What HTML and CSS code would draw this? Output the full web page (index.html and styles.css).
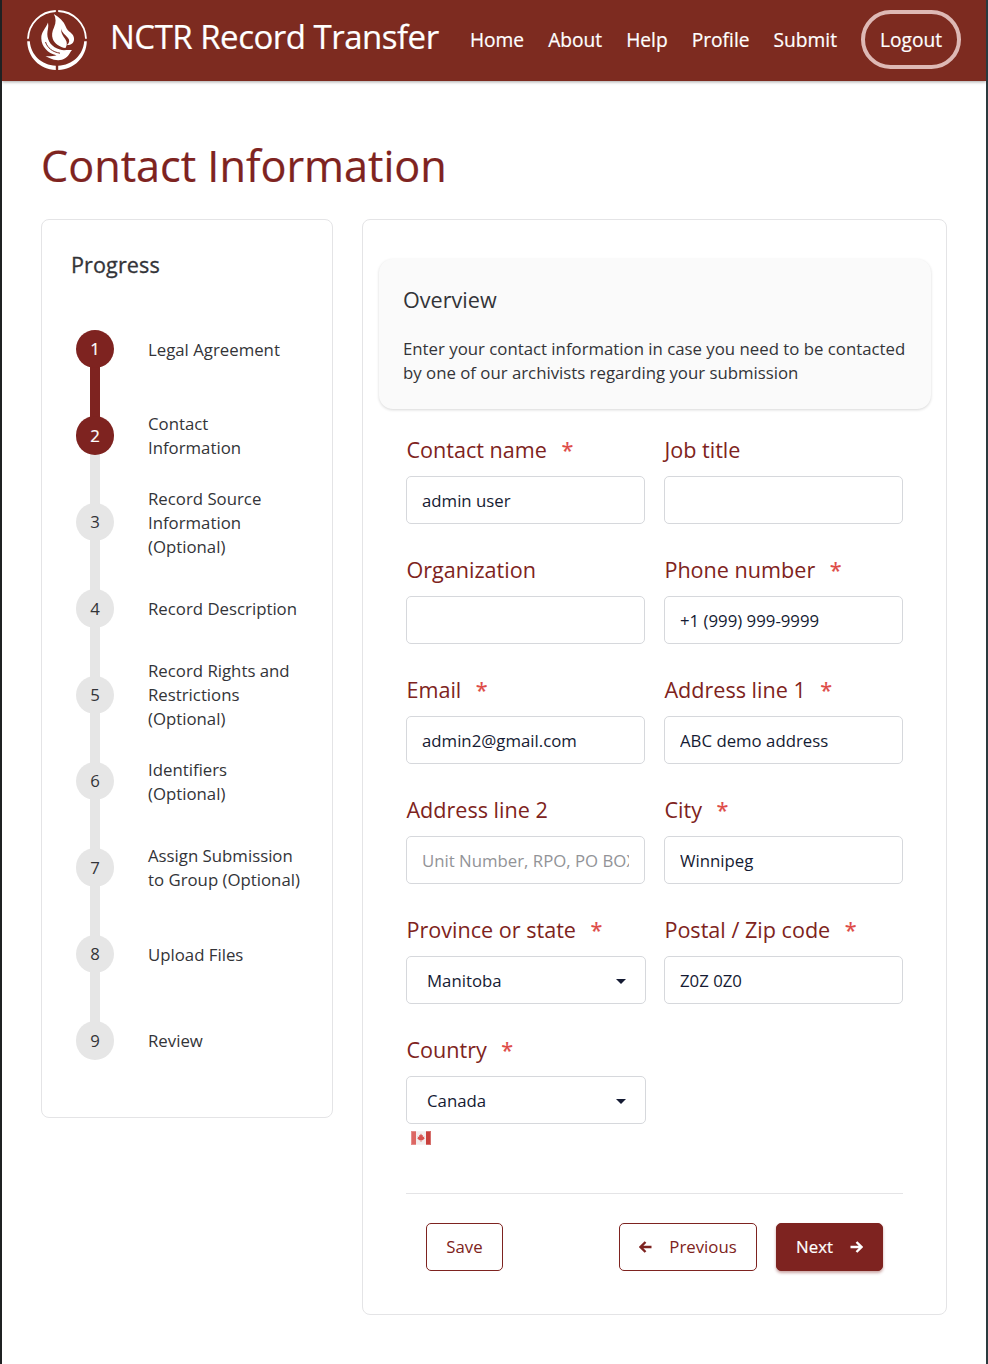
FILE: index.html
```html
<!DOCTYPE html>
<html lang="en">
<head>
<meta charset="utf-8">
<title>NCTR Record Transfer</title>
<link rel="stylesheet" href="styles.css">
</head>
<body>
<header class="header">
  <svg class="logo" viewBox="0 0 60 60" fill="none">
    <path stroke="#fff" d="M28.800 1A28.800 28.800 0 0 0 1 28.800M31.200 1A28.800 28.800 0 0 1 59 28.800" stroke-width="1.800"/>
    <path fill="#fff" d="M.2 31.200H2.800C3.800 45 14.500 54.900 28.800 55.800V60C12.500 59.400.6 47 .2 31.200ZM59.800 31.200H57.200C56.200 45 45.500 54.900 31.200 55.800V60C47.500 59.400 59.400 47 59.800 31.200Z"/>
    <path fill="#fff" d="M26.800 4C32 7 37 11.500 38.700 16.500C40 20.500 43 21.500 45.500 24.500C48 28 47.500 32.500 44 34.300C42.500 35 41 35.200 39.700 35.200C42.500 33 43 30.500 41 28C38 24.500 34.800 22.500 34 18.500C34 23.500 36.500 26.500 38.500 29.500C40.500 32.500 40 35.500 38.500 38C33 37.500 27.500 33.500 25.800 29C24.500 25.500 25 21.500 27 17.500C29.300 12.500 29 8 26.800 4Z"/>
    <path fill="#fff" d="M21 12.500C22 17 20.300 20.500 20.300 24C20.300 31 25 37.500 33 39.600C37 40.800 40.500 39.500 45 40C42.500 42.500 42.500 45.500 38.500 48C33.500 51.500 27.500 50.300 23 48.200C21.500 47.500 20 46.600 18.500 46.200C22.500 46.600 26.500 46.200 29.500 45.300C20.500 43.200 14.600 36.500 14.300 28.500C14 21.500 19 18.500 21 12.500Z"/>
    <path stroke="#7d2b20" stroke-width="1" d="M18.500 32C20.500 38 25.500 42 33 43.200M23 27C24.500 33 29 37.300 36 39.300"/>
  </svg>
  <div class="brand">NCTR Record Transfer</div>
  <nav class="nav">
    <a>Home</a><a>About</a><a>Help</a><a>Profile</a><a>Submit</a>
    <a class="logout">Logout</a>
  </nav>
</header>
<main class="page">
  <h1 class="title">Contact Information</h1>
  <div class="columns">
    <aside class="card progress">
      <h2 class="progress-title">Progress</h2>
      <ol class="steps">
        <li class="step done"><span class="dot">1</span><span class="name">Legal Agreement</span></li>
        <li class="step done"><span class="dot">2</span><span class="name">Contact Information</span></li>
        <li class="step"><span class="dot">3</span><span class="name">Record Source Information (Optional)</span></li>
        <li class="step"><span class="dot">4</span><span class="name">Record Description</span></li>
        <li class="step"><span class="dot">5</span><span class="name">Record Rights and Restrictions (Optional)</span></li>
        <li class="step"><span class="dot">6</span><span class="name">Identifiers (Optional)</span></li>
        <li class="step"><span class="dot">7</span><span class="name">Assign Submission to Group (Optional)</span></li>
        <li class="step"><span class="dot">8</span><span class="name">Upload Files</span></li>
        <li class="step"><span class="dot">9</span><span class="name">Review</span></li>
      </ol>
    </aside>
    <section class="card content">
      <div class="overview">
        <h2 class="overview-title">Overview</h2>
        <p class="overview-text">Enter your contact information in case you need to be contacted<br>by one of our archivists regarding your submission</p>
      </div>
      <form class="form">
        <div class="field"><label class="label">Contact name<span class="req">*</span></label><input class="input" value="admin user"></div>
        <div class="field"><label class="label">Job title</label><input class="input"></div>
        <div class="field"><label class="label">Organization</label><input class="input"></div>
        <div class="field"><label class="label">Phone number<span class="req">*</span></label><input class="input" value="+1 (999) 999-9999"></div>
        <div class="field"><label class="label">Email<span class="req">*</span></label><input class="input" value="admin2@gmail.com"></div>
        <div class="field"><label class="label">Address line 1<span class="req">*</span></label><input class="input" value="ABC demo address"></div>
        <div class="field"><label class="label">Address line 2</label><input class="input" placeholder="Unit Number, RPO, PO BOX..."></div>
        <div class="field"><label class="label">City<span class="req">*</span></label><input class="input" value="Winnipeg"></div>
        <div class="field"><label class="label">Province or state<span class="req">*</span></label>
          <div class="select"><span>Manitoba</span><svg class="caret" viewBox="0 0 10 5"><path d="M0 0H10L5 5Z" fill="#151b33"/></svg></div></div>
        <div class="field"><label class="label">Postal / Zip code<span class="req">*</span></label><input class="input" value="Z0Z 0Z0"></div>
        <div class="field"><label class="label">Country<span class="req">*</span></label>
          <div class="select"><span>Canada</span><svg class="caret" viewBox="0 0 10 5"><path d="M0 0H10L5 5Z" fill="#151b33"/></svg></div>
          <svg class="flag" viewBox="0 0 20 14">
            <rect width="20" height="14" fill="#f3eeee"/>
            <rect width="5" height="14" fill="#dc6763"/><rect x="15" width="5" height="14" fill="#c9403c"/>
            <rect x=".5" y=".5" width="19" height="13" fill="none" stroke="#fff" stroke-opacity=".25"/>
            <path d="M10 2.500L11 4.500L12 4L11.800 6L13.500 5.500L13 7L13.800 7.500L11.500 9.300L10.300 9.200V11H9.700V9.200L8.500 9.300L6.200 7.500L7 7L6.500 5.500L8.200 6L8 4L9 4.500Z" fill="#d8524f"/>
          </svg>
        </div>
      </form>
      <div class="actions">
        <button class="btn save">Save</button>
        <button class="btn prev"><svg class="arrow" viewBox="0 0 13 12"><path d="M12.500 6H1.500M6.500 1L1.500 6L6.500 11"/></svg>Previous</button>
        <button class="btn next">Next<svg class="arrow" viewBox="0 0 13 12"><path d="M.5 6H11.500M6.500 1L11.500 6L6.500 11"/></svg></button>
      </div>
    </section>
  </div>
</main>
</body>
</html>
```
FILE: styles.css
```css
* { box-sizing: border-box; }
body {
  margin: 0;
  height: 1364px;
  border-left: 2px solid #1f2122;
  border-right: 2px solid #2a3a3e;
  background: #fff;
  color: #333438;
  font-family: "Open Sans", sans-serif;
  font-size: 16.800px;
  line-height: 24px;
  overflow: hidden;
}
h1, h2, p, ol { margin: 0; padding: 0; font-weight: 400; }
.header {
  height: 81px;
  display: flex;
  align-items: center;
  padding: 0 25px 2px 25px;
  background: #7d2b20;
  color: #fff;
  box-shadow: 0 1px 3px rgba(0, 0, 0, .35);
}
.logo { width: 60px; height: 60px; }
.brand { margin: -5px 0 0 23px; font-size: 33px; line-height: 44px; letter-spacing: -.5px; white-space: nowrap; -webkit-text-stroke: .2px #fff; }
.nav { margin-left: auto; display: flex; align-items: center; gap: 24px; font-size: 19.200px; -webkit-text-stroke: .2px #fff; }
.logout { width: 100px; height: 59px; display: grid; place-items: center; border: 4px solid #deb9b5; border-radius: 30px; }
.page { padding: 56px 39px 0; }
.title { color: #7e2320; font-size: 43.200px; line-height: 58px; -webkit-text-stroke: .2px #7e2320; }
.columns { display: flex; align-items: flex-start; gap: 29px; margin-top: 24px; }
.card { border: 1px solid #e4e4e6; border-radius: 8px; }
.progress { width: 292px; height: 899px; padding: 29px 29px; }
.progress-title { font-size: 21.600px; line-height: 32px; letter-spacing: .1px; -webkit-text-stroke: .3px #333438; }
.steps { position: relative; z-index: 0; list-style: none; margin-top: 25px; }
.step { height: 86.400px; display: grid; grid-template-columns: 48px 155px; column-gap: 29px; align-items: center; }
.name { padding-top: 1.400px; }
.dot {
  position: relative;
  justify-self: center;
  width: 38.400px;
  height: 38.400px;
  border-radius: 50%;
  display: grid;
  place-items: center;
  padding-top: .6px;
  background: #e6e6e6;
}
.step + .step .dot::before {
  content: "";
  position: absolute;
  z-index: -1;
  left: 14.200px;
  bottom: 37px;
  width: 10px;
  height: 51px;
  background: #e6e6e6;
}
.done .dot { background: #7e2320; color: #fff; -webkit-text-stroke: .2px #fff; }
.step.done + .done .dot::before { background: #7e2320; }
.content { width: 585px; height: 1096px; padding: 39px 15px 0 16px; }
.overview {
  height: 150px;
  padding: 25px 24px;
  border-radius: 14px;
  background: #fafafa;
  box-shadow: 0 1px 3px rgba(0, 0, 0, .16);
}
.overview-title { font-size: 21.600px; line-height: 32px; }
.overview-text { margin-top: 21px; white-space: nowrap; }
.form { display: grid; grid-template-columns: 239px 239px; column-gap: 19px; grid-auto-rows: 120px; padding: 24px 0 0 27px; }
.label { display: block; height: 43px; padding-left: .4px; color: #7e2320; font-size: 21.600px; line-height: 34px; white-space: nowrap; }
.req { margin-left: 14.500px; color: #de4b47; -webkit-text-stroke: .2px #de4b47; }
.input, .select {
  display: block;
  width: 239px;
  height: 48px;
  padding: 1px 15px 0;
  border: 1px solid #d6d8dc;
  border-radius: 5px;
  background: #fff;
  color: #151b33;
  font: 16.800px "Open Sans", sans-serif;
  outline: 0;
}
.input::placeholder { color: #929397; opacity: 1; }
.select { display: flex; width: 240px; align-items: center; justify-content: space-between; padding: 1px 19px 0 20px; }
.caret { width: 10px; height: 5px; margin-top: 2px; }
.flag { display: block; width: 20px; height: 14px; margin: 7px 0 0 5px; }
.actions {
  display: flex;
  margin: 40px 28px 0 27px;
  padding: 29px 20px 0 20px;
  border-top: 1px solid #e4e4e6;
}
.btn {
  display: flex;
  align-items: center;
  justify-content: center;
  height: 48px;
  padding: 0 0 1px;
  border: 1px solid #7e2320;
  border-radius: 5px;
  background: #fff;
  color: #7e2320;
  font: 16.800px "Open Sans", sans-serif;
}
.save { width: 77px; }
.prev { width: 138px; margin-left: auto; gap: 17px; }
.next { width: 107px; margin-left: 19px; gap: 17px; background: #7e2320; color: #fff; -webkit-text-stroke: .2px #fff; box-shadow: 0 2px 3px rgba(126, 35, 32, .4); }
.arrow { width: 13px; height: 12px; fill: none; stroke: currentColor; stroke-width: 2.400; }
```
